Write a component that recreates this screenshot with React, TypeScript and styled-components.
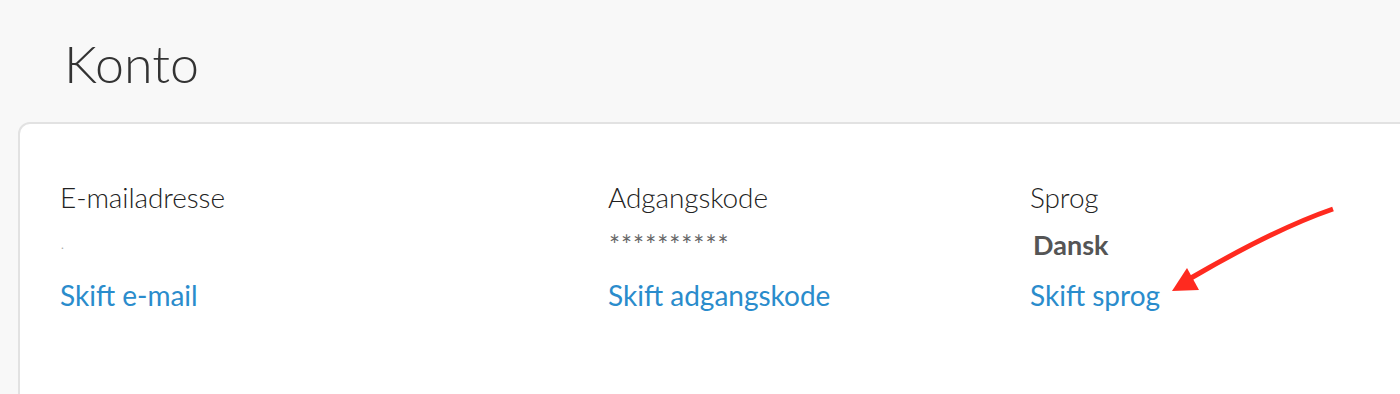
import React from "react";
import styled, { createGlobalStyle } from "styled-components";

const Global = createGlobalStyle`
  html, body { margin: 0; padding: 0; }
  body {
    background: #f8f8f8;
    font-family: Lato, "Open Sans", sans-serif;
    overflow: hidden;
  }
`;

const Page = styled.div`
  width: 1400px;
  height: 394px;
  overflow: hidden;
  position: relative;
`;

const Title = styled.h1`
  margin: 0;
  padding: 33px 0 0 64px;
  height: 122px;
  box-sizing: border-box;
  font-family: Lato, sans-serif;
  font-weight: 300;
  font-size: 52px;
  line-height: 60px;
  color: #333;
`;

const Card = styled.section`
  margin: 0 0 0 18px;
  width: 1420px;
  height: 320px;
  box-sizing: border-box;
  background: #fff;
  border: 2px solid #e2e2e2;
  border-radius: 12px;
  padding: 56px 0 0 40px;
  display: grid;
  grid-template-columns: 548px 422px 1fr;
  align-items: start;
`;

const Column = styled.div`
  display: flex;
  flex-direction: column;
  align-items: flex-start;
`;

const Label = styled.div`
  font-weight: 300;
  font-size: 28px;
  line-height: 34px;
  color: #222;
  letter-spacing: -0.1px;
`;

const Value = styled.div<{ $bold?: boolean }>`
  height: 34px;
  margin-top: 14px;
  font-size: ${(p) => (p.$bold ? "27px" : "26px")};
  font-weight: ${(p) => (p.$bold ? 700 : 400)};
  line-height: 34px;
  color: ${(p) => (p.$bold ? "#555" : "#666")};
  padding-left: ${(p) => (p.$bold ? "3px" : "1px")};
  letter-spacing: ${(p) => (p.$bold ? "0" : "1px")};
`;

const Dot = styled.span`
  font-size: 12px;
  color: #aaa;
  vertical-align: 16px;
`;

const Link = styled.a`
  margin-top: 16px;
  font-size: 28px;
  line-height: 34px;
  color: #2a8ccc;
  text-decoration: none;
  cursor: pointer;
`;

const Arrow = styled.svg`
  position: absolute;
  left: 0;
  top: 0;
  pointer-events: none;
`;

export default function App() {
  return (
    <Page>
      <Global />
      <Title>Konto</Title>
      <Card>
        <Column>
          <Label>E-mailadresse</Label>
          <Value>
            <Dot>.</Dot>
          </Value>
          <Link>Skift e-mail</Link>
        </Column>
        <Column>
          <Label>Adgangskode</Label>
          <Value>**********</Value>
          <Link>Skift adgangskode</Link>
        </Column>
        <Column>
          <Label>Sprog</Label>
          <Value $bold>Dansk</Value>
          <Link>Skift sprog</Link>
        </Column>
      </Card>
      <Arrow width="1400" height="394" viewBox="0 0 1400 394">
        <path
          d="M1333 209 Q1275 229 1191 278"
          fill="none"
          stroke="#ff2a1f"
          strokeWidth="5"
          strokeLinecap="butt"
        />
        <polygon points="1172,291 1187,268 1199,290" fill="#ff2a1f" />
      </Arrow>
    </Page>
  );
}
